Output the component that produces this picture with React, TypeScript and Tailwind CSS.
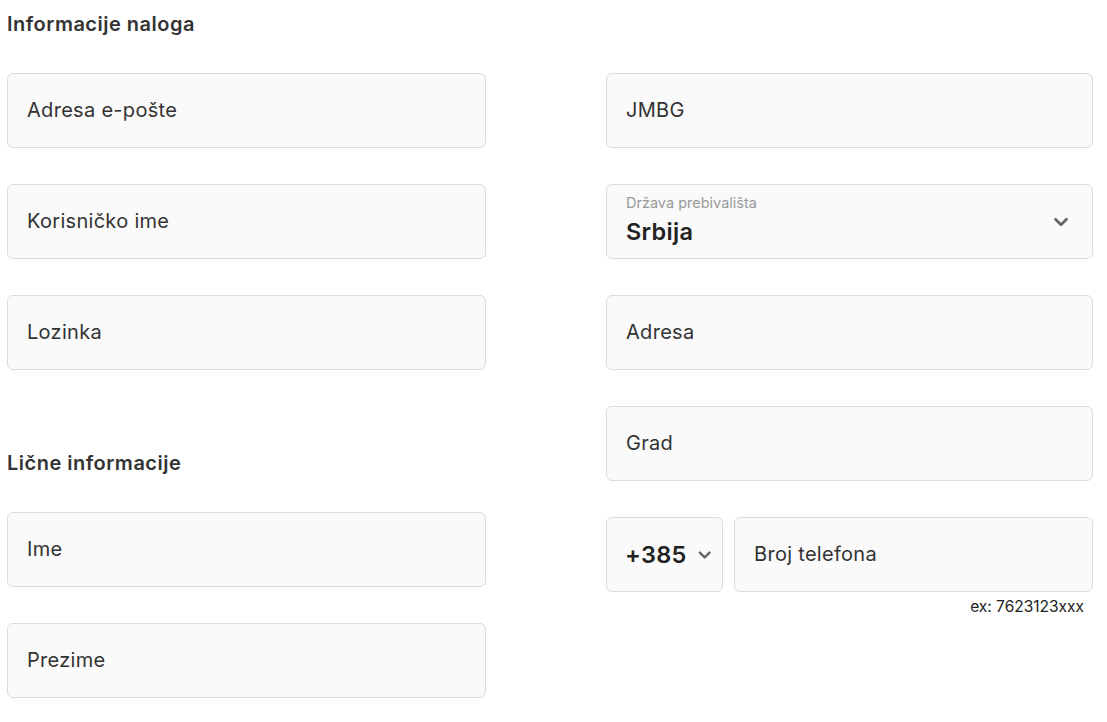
import { ChevronDown } from 'lucide-react'

const font = { fontFamily: 'Inter, "Noto Sans", sans-serif' }

function Field({ label }: { label: string }) {
  return (
    <div className="h-[75px] w-full rounded-md border border-[#dcdcdc] bg-[#fafafa] px-[19px] pb-[2px] flex items-center">
      <span className="text-[20px] tracking-[0.3px] text-[#333]">{label}</span>
    </div>
  )
}

export default function App() {
  return (
    <div className="bg-white min-h-[722px] pl-[7px] pt-[10px] text-[#333]" style={font}>
      <div className="flex gap-[120px]">
        {/* left column */}
        <div className="w-[479px] flex flex-col">
          <h2 className="text-[20px] font-semibold tracking-[0.5px] leading-[28px] text-[#333]">Informacije naloga</h2>
          <div className="mt-[35px] flex flex-col gap-[36px]">
            <Field label="Adresa e-pošte" />
            <Field label="Korisničko ime" />
            <Field label="Lozinka" />
          </div>
          <h2 className="mt-[79px] text-[20px] font-semibold tracking-[0.5px] leading-[28px] text-[#333]">Lične informacije</h2>
          <div className="mt-[35px] flex flex-col gap-[36px]">
            <Field label="Ime" />
            <Field label="Prezime" />
          </div>
        </div>

        {/* right column */}
        <div className="w-[487px] pt-[63px] flex flex-col gap-[36px]">
          <Field label="JMBG" />
          <div className="h-[75px] w-full rounded-md border border-[#dcdcdc] bg-[#fafafa] pl-[19px] pr-5 flex items-center justify-between">
            <div className="flex flex-col -mt-[2px]">
              <span className="text-[14.5px] leading-[18px] text-[#999]">Država prebivališta</span>
              <span className="mt-[5px] text-[23.5px] leading-[30px] font-semibold tracking-[0.3px] text-[#222]">Srbija</span>
            </div>
            <ChevronDown className="w-[22px] h-[22px] text-[#666]" strokeWidth={3} />
          </div>
          <Field label="Adresa" />
          <Field label="Grad" />
          <div className="flex flex-col">
            <div className="flex gap-[11px]">
              <div className="h-[75px] w-[117px] shrink-0 rounded-md border border-[#dcdcdc] bg-[#fafafa] pl-[18px] pr-2 flex items-center gap-[8px]">
                <span className="text-[23.5px] font-semibold tracking-[0.3px] text-[#222]">+385</span>
                <ChevronDown className="w-[20px] h-[20px] text-[#666]" strokeWidth={3} />
              </div>
              <Field label="Broj telefona" />
            </div>
            <div className="mt-[5px] pr-[9px] text-right text-[15.5px] leading-[20px] text-[#222]">ex: 7623123xxx</div>
          </div>
        </div>
      </div>
    </div>
  )
}
